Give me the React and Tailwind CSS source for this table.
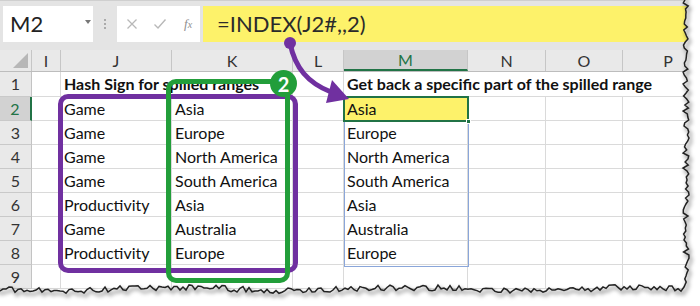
import React from "react";

function rng(seed) {
  let s = seed;
  return () => {
    s = (s * 16807) % 2147483647;
    return s / 2147483647;
  };
}

function TornEdge() {
  const r = rng(11);
  const right = [];
  for (let y = -6; y <= 284; y += 3) right.push([686 + (r() - 0.5) * 6, y]);
  const bottom = [];
  for (let x = 684; x >= -8; x -= 3)
    bottom.push([x, 289 + Math.sin(x / 37) * 1.5 + (r() - 0.5) * 6]);
  const pts = [...right, ...bottom];
  const edge = "M" + pts.map((p) => p[0].toFixed(1) + "," + p[1].toFixed(1)).join(" L");
  const outside =
    "M686,-20 L" +
    pts.map((p) => p[0].toFixed(1) + "," + p[1].toFixed(1)).join(" L") +
    " L-20,289 L-20,330 L720,330 L720,-20 Z";
  return (
    <svg className="absolute inset-0 pointer-events-none" width="700" height="306">
      <defs>
        <filter id="sh" x="-10%" y="-10%" width="120%" height="130%">
          <feDropShadow dx="2" dy="3" stdDeviation="2" floodColor="#000" floodOpacity="0.65" />
        </filter>
      </defs>
      <path d={outside} fill="#fff" />
      <path d={edge} fill="none" stroke="#222" strokeWidth="1.5" filter="url(#sh)" />
    </svg>
  );
}

const colW = [
  "w-[32px]",
  "w-[29px]",
  "w-[111px]",
  "w-[121px]",
  "w-[51px]",
  "w-[124px]",
  "w-[78px]",
  "w-[77px]",
  "w-[90px]",
];
const colNames = ["", "I", "J", "K", "L", "M", "N", "O", "P"];

const data = [
  { j: "Game", k: "Asia", m: "Asia" },
  { j: "Game", k: "Europe", m: "Europe" },
  { j: "Game", k: "North America", m: "North America" },
  { j: "Game", k: "South America", m: "South America" },
  { j: "Productivity", k: "Asia", m: "Asia" },
  { j: "Game", k: "Australia", m: "Australia" },
  { j: "Productivity", k: "Europe", m: "Europe" },
];

function Cell({ w, children, bold, noRight, className = "" }) {
  return (
    <div
      className={`${w} shrink-0 h-full flex items-center pl-[3px] whitespace-nowrap text-[16px] text-[#111] ${
        noRight ? "" : "border-r border-[#dadada]"
      } border-b border-[#dadada] ${bold ? "font-bold" : ""} ${className}`}
    >
      <span className="relative z-0">{children}</span>
    </div>
  );
}

function RowHeader({ n, active }) {
  return (
    <div
      className={`w-[32px] shrink-0 h-full flex items-center justify-center text-[16px] border-b border-[#c9c9c9] ${
        active
          ? "bg-[#d2d2d2] text-[#217346] border-r-2 border-r-[#217346]"
          : "bg-[#e9e9e9] text-[#333] border-r border-r-[#c3c3c3]"
      }`}
    >
      {n}
    </div>
  );
}

export default function App() {
  return (
    <div
      className="relative w-[700px] h-[306px] overflow-hidden bg-white"
      style={{ fontFamily: "Lato, 'Open Sans', sans-serif" }}
    >
      {/* Formula bar */}
      <div className="h-[50px] bg-[#e4e4e4] border-t border-[#cfcfcf] flex items-start pt-[5px]">
        <div className="ml-[3px] w-[90px] h-[36px] bg-white flex items-center relative">
          <span className="ml-[7px] text-[22px] text-[#222] leading-none">M2</span>
          <span className="absolute left-[82px] top-[14px] w-0 h-0 border-l-[3px] border-r-[3px] border-t-[4px] border-l-transparent border-r-transparent border-t-[#777]" />
        </div>
        <div className="w-[24px] h-[36px] flex flex-col items-center justify-center gap-[2px]">
          <span className="w-[2px] h-[2px] bg-[#aaa]" />
          <span className="w-[2px] h-[2px] bg-[#aaa]" />
          <span className="w-[2px] h-[2px] bg-[#aaa]" />
        </div>
        <div className="w-[83px] h-[36px] bg-white flex items-center">
          <svg width="12" height="12" viewBox="0 0 12 12" className="ml-[9px]">
            <path d="M1.5 1.5 L10.5 10.5 M10.5 1.5 L1.5 10.5" stroke="#b8b8b8" strokeWidth="1.3" />
          </svg>
          <svg width="14" height="12" viewBox="0 0 14 12" className="ml-[15px]">
            <path d="M1.5 6.5 L5 10 L12.5 1.5" stroke="#b8b8b8" strokeWidth="1.4" fill="none" />
          </svg>
          <span
            className="ml-[17px] text-[13px] italic text-[#8f8f8f]"
            style={{ fontFamily: "'Liberation Serif', serif" }}
          >
            f<span className="text-[10px]">x</span>
          </span>
        </div>
        <div className="ml-[3px] flex-1 h-[36px] bg-[#fdf26a] flex items-center">
          <span className="ml-[14px] text-[22px] text-[#2b2b2b] leading-none">=INDEX(J2#,,2)</span>
        </div>
      </div>

      {/* Column headers */}
      <div className="h-[22px] flex bg-[#e9e9e9] border-b border-[#bdbdbd]">
        {colNames.map((c, i) => (
          <div
            key={i}
            className={`${colW[i]} shrink-0 h-full flex items-center justify-center text-[16px] relative ${
              i === 5
                ? "bg-[#d2d2d2] text-[#217346] border-b-2 border-[#217346]"
                : "text-[#333]"
            } ${i < 8 ? "border-r border-r-[#c6c6c6]" : ""}`}
          >
            {i === 0 ? (
              <svg className="absolute right-[3px] bottom-[3px]" width="15" height="15" viewBox="0 0 15 15">
                <polygon points="15,0 15,15 0,15" fill="#b7b7b7" />
              </svg>
            ) : (
              c
            )}
          </div>
        ))}
      </div>

      {/* Row 1 */}
      <div className="h-[25px] flex">
        <RowHeader n={1} />
        <Cell w={colW[1]} />
        <Cell w={colW[2]} bold noRight>
          Hash Sign for spilled ranges
        </Cell>
        <Cell w={colW[3]} />
        <Cell w={colW[4]} />
        <Cell w={colW[5]} bold noRight>
          Get back a specific part of the spilled range
        </Cell>
        <Cell w={colW[6]} noRight />
        <Cell w={colW[7]} noRight />
        <Cell w={colW[8]} />
      </div>

      {data.map((d, i) => (
        <div key={i} className="h-[24px] flex">
          <RowHeader n={i + 2} active={i === 0} />
          <Cell w={colW[1]} />
          <Cell w={colW[2]}>{d.j}</Cell>
          <Cell w={colW[3]}>{d.k}</Cell>
          <Cell w={colW[4]} />
          <Cell w={colW[5]} className={i === 0 ? "bg-[#fdf26a]" : ""}>
            {d.m}
          </Cell>
          <Cell w={colW[6]} />
          <Cell w={colW[7]} />
          <Cell w={colW[8]} />
        </div>
      ))}
      <div className="h-[24px] flex">
        <RowHeader n={9} />
        {colW.slice(1).map((w, i) => (
          <Cell key={i} w={w} />
        ))}
      </div>

      {/* Spill range border */}
      <div className="absolute left-[344px] top-[97px] w-[125px] h-[170px] border border-[#8aa6da] pointer-events-none" />
      {/* Active cell */}
      <div className="absolute left-[343px] top-[96px] w-[126px] h-[26px] border-2 border-[#217346] pointer-events-none" />
      <div className="absolute left-[466px] top-[119px] w-[5px] h-[5px] bg-[#217346] border border-white" />

      {/* Purple rectangle */}
      <div className="absolute left-[58px] top-[94px] w-[240px] h-[179px] border-[5px] border-[#7030a0] rounded-[10px]" />
      {/* Green rectangle */}
      <div className="absolute left-[166px] top-[79px] w-[124px] h-[204px] border-[5px] border-[#229e3a] rounded-[10px]" />
      {/* Badge */}
      <div className="absolute left-[270px] top-[70px] w-[27px] h-[27px] rounded-full bg-[#229e3a] flex items-center justify-center text-white font-bold text-[20px] leading-none">
        2
      </div>

      {/* Arrow */}
      <svg className="absolute inset-0 pointer-events-none" width="700" height="306">
        <circle cx="290" cy="43" r="6" fill="#7030a0" />
        <path d="M290,43 C295,68 308,83 331,92" stroke="#7030a0" strokeWidth="5" fill="none" />
        <polygon points="349,99 326,103 332,80" fill="#7030a0" />
      </svg>

      <TornEdge />
    </div>
  );
}
